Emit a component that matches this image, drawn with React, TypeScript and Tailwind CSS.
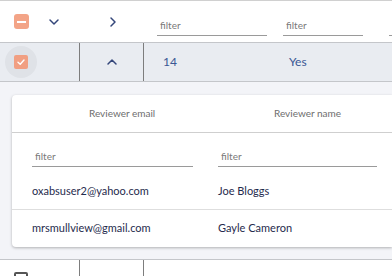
import React from 'react';

const Chevron = ({ dir }: { dir: 'down' | 'up' | 'right' }) => {
  const d =
    dir === 'down' ? 'M2 4 L6 8 L10 4' : dir === 'up' ? 'M2 8 L6 4 L10 8' : 'M4 2 L8 6 L4 10';
  return (
    <svg width="12" height="12" viewBox="0 0 12 12" fill="none">
      <path d={d} stroke="#34467a" strokeWidth="1.5" strokeLinecap="round" strokeLinejoin="round" />
    </svg>
  );
};

const FilterInput = ({ className }: { className: string }) => (
  <div className={`shrink-0 border-b border-[#9a9a9a] pb-[3px] pl-[3px] text-[10px] leading-[14px] text-[#7a7a7a] ${className}`}>
    filter
  </div>
);

const reviewers = [
  { email: 'oxabsuser2@yahoo.com', name: 'Joe Bloggs' },
  { email: 'mrsmullview@gmail.com', name: 'Gayle Cameron' },
];

export default function App() {
  return (
    <div className="w-[392px] h-[276px] overflow-hidden bg-white font-['Lato','Noto_Sans',sans-serif]">
      {/* header row */}
      <div className="flex h-[42px] items-center border-t border-[#d0d0d0]">
        <div className="flex w-[80px] shrink-0 items-center pl-[14px]">
          <div className="flex h-[15px] w-[15px] items-center justify-center rounded-[3px] bg-[#f3a487]">
            <div className="h-[2px] w-[9px] bg-white" />
          </div>
          <div className="ml-[19px] flex pt-[1px]">
            <Chevron dir="down" />
          </div>
        </div>
        <div className="flex w-[65px] shrink-0 justify-center">
          <Chevron dir="right" />
        </div>
        <div className="flex min-w-0 flex-1 items-end self-stretch overflow-hidden pb-[6px]">
          <FilterInput className="ml-[12px] w-[110px]" />
          <FilterInput className="ml-[16px] w-[80px]" />
          {/* next column's filter, cut off at the window edge */}
          <div className="ml-[26px] w-[40px] shrink-0 border-b border-[#9a9a9a]" />
        </div>
      </div>

      {/* expanded data row */}
      <div className="flex h-[40px] border-y border-[#c4c6ca] bg-[#e9ecf1]">
        <div className="flex w-[79px] shrink-0 items-center pl-[5px]">
          <div className="flex h-[32px] w-[32px] items-center justify-center rounded-full bg-[#dfe2e7]">
            <div className="flex h-[14px] w-[14px] items-center justify-center rounded-[2px] bg-[#f19f82]">
              <svg width="10" height="10" viewBox="0 0 10 10" fill="none">
                <path d="M2 5.2 L4.2 7.2 L8 3" stroke="white" strokeWidth="1.4" strokeLinecap="round" strokeLinejoin="round" />
              </svg>
            </div>
          </div>
        </div>
        <div className="flex w-[65px] shrink-0 items-center justify-center border-x border-[#7d7d7d]">
          <Chevron dir="up" />
        </div>
        <div className="flex flex-1 items-center text-[12px] text-[#3a5794]">
          <span className="ml-[19px]">14</span>
          <span className="ml-[112px]">Yes</span>
        </div>
      </div>

      {/* expanded panel */}
      <div className="h-[178px] border-b border-[#c4c6ca] bg-[#f3f4f8] pl-[12px] pt-[13px]">
        <div className="h-[152px] rounded-l-[4px] bg-white shadow-[0_1px_3px_rgba(0,0,0,0.28)]">
          <div className="flex h-[38px] items-center border-b border-[#cfcfcf] text-[10px] text-[#6e6e6e]">
            <div className="w-[206px] shrink-0 pl-[77px]">Reviewer email</div>
            <div className="pl-[56px]">Reviewer name</div>
          </div>
          <div className="flex h-[40px] items-end pb-[6px]">
            <FilterInput className="ml-[20px] w-[161px]" />
            <FilterInput className="ml-[25px] w-[159px]" />
          </div>
          {reviewers.map((r, i) => (
            <div
              key={r.email}
              className={`flex h-[37px] items-center text-[11px] text-[#1f2b4d] ${i === 0 ? 'border-b border-[#dedede]' : ''}`}
            >
              <div className="w-[206px] shrink-0 pl-[20px]">{r.email}</div>
              <div>{r.name}</div>
            </div>
          ))}
        </div>
      </div>

      {/* next row */}
      <div className="flex h-[20px]">
        <div className="w-[79px] shrink-0 pl-[14px] pt-[12px]">
          <div className="h-[14px] w-[14px] rounded-[2px] border-2 border-[#555]" />
        </div>
        <div className="w-[65px] shrink-0 border-x border-[#7d7d7d]" />
      </div>
    </div>
  );
}
